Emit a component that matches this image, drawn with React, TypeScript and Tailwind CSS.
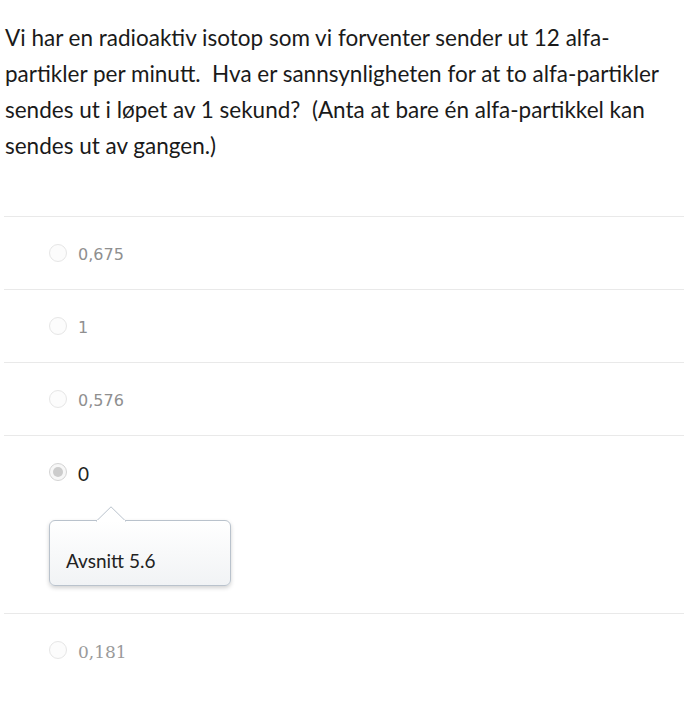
import React from 'react';

type Option = { label: string; font: string; color: string; selected?: boolean };

const options: Option[] = [
  { label: '0,675', font: "font-['DejaVu_Sans',sans-serif] text-[16px] pt-[4px]", color: 'text-[#8f8f8f]' },
  { label: '1', font: "font-['DejaVu_Sans',sans-serif] text-[16px] pt-[4px]", color: 'text-[#8f8f8f]' },
  { label: '0,576', font: "font-['DejaVu_Sans',sans-serif] text-[16px] pt-[4px]", color: 'text-[#8f8f8f]' },
  { label: '0', font: "font-['Lato',sans-serif] text-[19px] pt-[2px]", color: 'text-[#222]', selected: true },
  { label: '0,181', font: "font-['DejaVu_Serif',serif] text-[17px] pt-[4px]", color: 'text-[#9a9a9a]' },
];

const Radio: React.FC<{ checked?: boolean }> = ({ checked }) => (
  <span
    className={
      'flex h-[18px] w-[18px] shrink-0 items-center justify-center rounded-full border ' +
      (checked ? 'border-[#d4d4d4] bg-[#f7f7f7]' : 'border-[#e6e6e6] bg-[#fcfcfc]')
    }
  >
    {checked && <span className="h-[10px] w-[10px] rounded-full bg-[#cccccc]" />}
  </span>
);

const Hint: React.FC = () => (
  <div className="relative mt-[25px] w-[182px] pt-[14px]">
    {/* arrow */}
    <svg className="absolute left-[47px] top-0" width="30" height="16" viewBox="0 0 30 16">
      <path d="M0 15.5 L15 0.8 L30 15.5" fill="#ffffff" stroke="#b9c2cc" strokeWidth="1" />
    </svg>
    <div className="rounded-[6px] border border-[#b9c2cc] bg-gradient-to-b from-white to-[#f1f3f5] pl-[16px] pt-[27px] pb-[11px] shadow-[0_2px_4px_rgba(0,0,0,0.18)]">
      <span className="font-['Lato',sans-serif] text-[19px] leading-[26px] text-[#222]">Avsnitt 5.6</span>
    </div>
    <div className="absolute left-[48px] top-[14px] h-[2px] w-[28px] bg-white" />
  </div>
);

export default function App() {
  return (
    <div className="min-h-[701px] w-[694px] bg-white px-[4px] pt-[20px]">
      <p className="whitespace-nowrap pl-[1px] font-['Lato',sans-serif] text-[22.5px] leading-[36px] text-[#1a1a1a]">
        Vi har en radioaktiv isotop som vi forventer sender ut 12 alfa-
        <br />
        partikler per minutt.&nbsp; Hva er sannsynligheten for at to alfa-partikler
        <br />
        sendes ut i løpet av 1 sekund?&nbsp; (Anta at bare én alfa-partikkel kan
        <br />
        sendes ut av gangen.)
      </p>
      <div className="mt-[52px] w-[680px]">
        {options.map((o) => (
          <div key={o.label} className="border-t border-[#e9e9e9] pl-[45px] py-[27px]">
            <div className="flex h-[18px] items-center gap-[11px]">
              <Radio checked={o.selected} />
              <span className={o.font + ' ' + o.color + ' leading-none'}>{o.label}</span>
            </div>
            {o.selected && <Hint />}
          </div>
        ))}
      </div>
    </div>
  );
}
